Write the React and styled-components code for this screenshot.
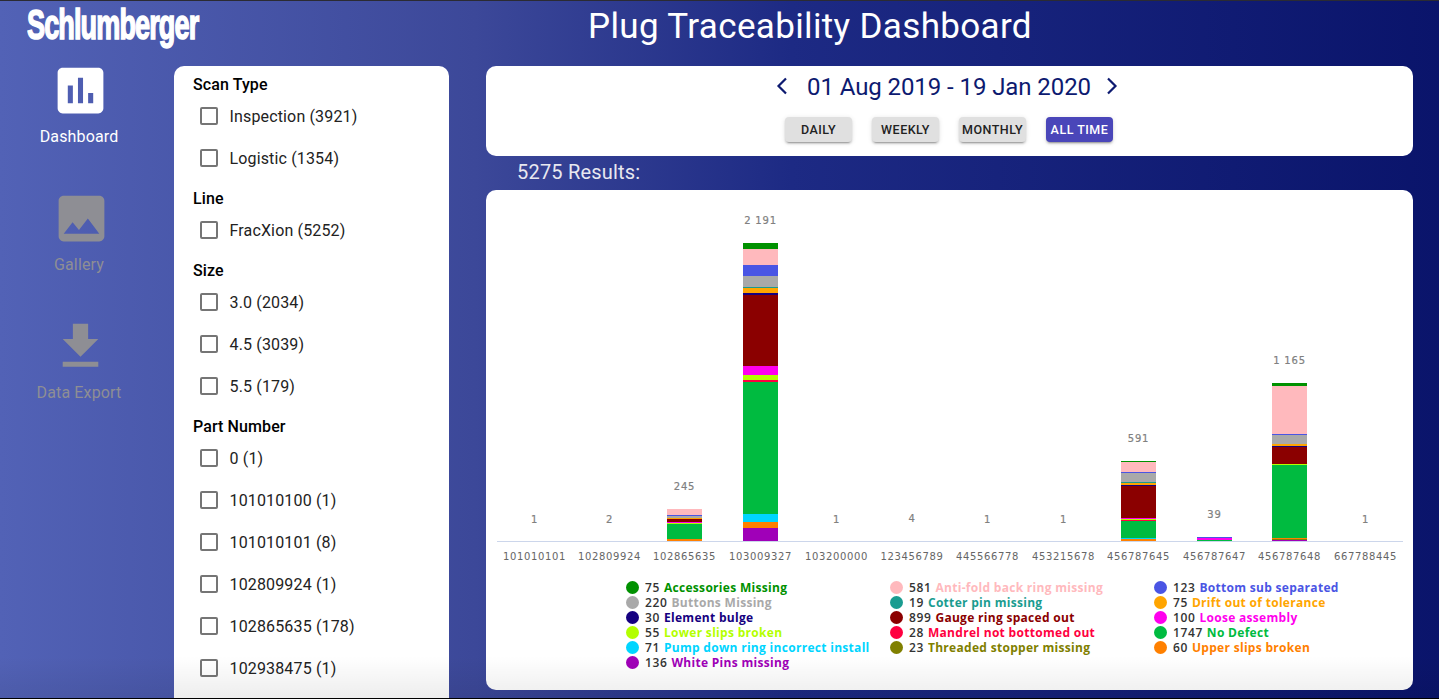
import React from 'react';
import styled, { createGlobalStyle } from 'styled-components';

const Global = createGlobalStyle`
  html, body { margin: 0; padding: 0; height: 100%; overflow: hidden; }
  body { font-family: Roboto, "Liberation Sans", sans-serif; }
`;

const Page = styled.div`
  position: relative;
  width: 1439px;
  height: 699px;
  overflow: hidden;
  box-sizing: border-box;
  border-top: 1px solid #2b2b33;
  border-bottom: 1px solid #000;
  background: linear-gradient(90deg, #5262b6 0%, #3c4899 33%, #1d2a84 55%, #0a146b 100%);
`;
const Header = styled.header`
  display: flex;
  align-items: center;
  height: 65px;
`;
const LogoBox = styled.div`
  width: 173px;
  margin-left: 27px;
  height: 50px;
  margin-top: -17px;
`;
const Logo = styled.span`
  display: inline-block;
  color: #fff;
  font-family: "Liberation Sans", sans-serif;
  font-weight: 700;
  font-size: 42px;
  line-height: 50px;
  letter-spacing: -1.4px;
  white-space: nowrap;
  -webkit-text-stroke: 1.6px #fff;
  transform: scaleX(0.645);
  transform-origin: left center;
`;
const Title = styled.h1`
  flex: 1;
  margin: 0 19px 0 0;
  padding-bottom: 15px;
  text-align: center;
  color: #fff;
  font-size: 35px;
  font-weight: 400;
  letter-spacing: 0.35px;
`;
const Body = styled.div`
  display: flex;
  height: 633px;
`;
const Nav = styled.nav`
  width: 158px;
  margin-right: 16px;
  display: flex;
  flex-direction: column;
  align-items: center;
  flex: none;
`;
const NavItem = styled.div`
  height: 128px;
  display: flex;
  flex-direction: column;
  align-items: center;
  color: ${p => (p.$active ? '#ffffff' : '#8e8e94')};
  font-size: 16px;
  letter-spacing: 0.15px;
  svg { display: block; margin: -6px 0 0 4px; fill: currentColor; }
`;
const NavLabel = styled.span`
  margin-top: 4px;
  line-height: 24px;
`;
const Filters = styled.aside`
  width: 275px;
  flex: none;
  background: #fff;
  border-radius: 10px 10px 0 0;
  box-sizing: border-box;
  padding: 8px 0 0 19px;
  overflow: hidden;
`;
const GroupTitle = styled.div`
  font-size: 16px;
  font-weight: 500;
  line-height: 21px;
  color: #000;
  letter-spacing: 0.1px;
`;
const Group = styled.div`
  margin-bottom: 9px;
`;
const Check = styled.label`
  display: flex;
  align-items: center;
  height: 42px;
  padding-left: 7px;
  font-size: 16px;
  letter-spacing: 0.15px;
  color: #222;
`;
const Box = styled.span`
  width: 18px;
  height: 18px;
  box-sizing: border-box;
  border: 2px solid #757575;
  border-radius: 2px;
  margin-right: 11.5px;
`;
const Main = styled.main`
  width: 927px;
  margin-left: 37px;
  flex: none;
`;
const DateCard = styled.section`
  background: #fff;
  border-radius: 10px;
  height: 90px;
  display: flex;
  flex-direction: column;
  align-items: center;
`;
const DateRow = styled.div`
  display: flex;
  align-items: center;
  justify-content: center;
  gap: 13px;
  margin-top: 6px;
  height: 30px;
  padding-right: 5px;
  color: #0d1a70;
  svg { display: block; margin-top: -3px; }
  svg:last-child { margin-left: -4px; }
`;
const DateText = styled.div`
  font-size: 24px;
  line-height: 30px;
  letter-spacing: -0.08px;
`;
const Buttons = styled.div`
  display: flex;
  gap: 20px;
  margin-top: 15px;
  padding-right: 1px;
`;
const Btn = styled.button`
  width: 67px;
  height: 25px;
  padding: 0;
  border: 0;
  border-radius: 4px;
  font-family: inherit;
  font-size: 12.5px;
  font-weight: 500;
  letter-spacing: 0.5px;
  white-space: nowrap;
  background: ${p => (p.$active ? '#4a46b9' : '#e0e0e0')};
  color: ${p => (p.$active ? '#fff' : '#222')};
  box-shadow: 0 3px 1px -2px rgba(0,0,0,.2), 0 2px 2px 0 rgba(0,0,0,.14), 0 1px 5px 0 rgba(0,0,0,.12);
`;
const Results = styled.div`
  height: 34px;
  padding-left: 31px;
  color: #e8e8f0;
  font-size: 20px;
  line-height: 32px;
  letter-spacing: 0.2px;
`;
const ChartCard = styled.section`
  background: #fff;
  border-radius: 10px;
  height: 500px;
  overflow: hidden;
  svg { display: block; }
`;
const Legend = styled.div`
  display: grid;
  grid-template-columns: repeat(3, 264px);
  grid-auto-rows: 15px;
  padding: 5px 0 0 140px;
  font-family: "Open Sans", sans-serif;
  font-size: 12px;
  font-weight: 700;
  letter-spacing: 0.3px;
  line-height: 15px;
`;
const LegendItem = styled.div`
  display: flex;
  align-items: center;
  white-space: nowrap;
  color: ${p => p.$color};
`;
const Dot = styled.span`
  width: 13px;
  height: 13px;
  border-radius: 50%;
  margin-right: 6px;
  background: ${p => p.$color};
`;
const Count = styled.span`
  color: #333;
  font-weight: 600;
  letter-spacing: 0.6px;
  margin-right: 4px;
`;
const Fade = styled.div`
  position: absolute;
  left: 0;
  right: 0;
  bottom: 0;
  height: 42px;
  background: linear-gradient(180deg, rgba(0,0,0,0), rgba(0,0,0,.07));
  pointer-events: none;
`;

const C = {
  acc: '#009100', anti: '#ffb9bd', bot: '#4a55e4', btn: '#a9a9a9', cot: '#1a9c90',
  drift: '#ffa500', el: '#150080', gauge: '#8b0000', loose: '#ff00ee', low: '#b3ff00',
  man: '#ff0040', no: '#00bb40', pump: '#00d5ff', thr: '#808000', up: '#ff8000', white: '#a000b8',
};

const filters = [
  ['Scan Type', ['Inspection (3921)', 'Logistic (1354)']],
  ['Line', ['FracXion (5252)']],
  ['Size', ['3.0 (2034)', '4.5 (3039)', '5.5 (179)']],
  ['Part Number', ['0 (1)', '101010100 (1)', '101010101 (8)', '102809924 (1)', '102865635 (178)', '102938475 (1)']],
];

const legend = [
  [75, 'Accessories Missing', C.acc], [581, 'Anti-fold back ring missing', C.anti], [123, 'Bottom sub separated', C.bot],
  [220, 'Buttons Missing', C.btn], [19, 'Cotter pin missing', C.cot], [75, 'Drift out of tolerance', C.drift],
  [30, 'Element bulge', C.el], [899, 'Gauge ring spaced out', C.gauge], [100, 'Loose assembly', C.loose],
  [55, 'Lower slips broken', C.low], [28, 'Mandrel not bottomed out', C.man], [1747, 'No Defect', C.no],
  [71, 'Pump down ring incorrect install', C.pump], [23, 'Threaded stopper missing', C.thr], [60, 'Upper slips broken', C.up],
  [136, 'White Pins missing', C.white],
];

const cats = [
  ['101010101', 534.5, '1', 519],
  ['102809924', 609.5, '2', 519],
  ['102865635', 684.5, '245', 486],
  ['103009327', 760.5, '2 191', 220],
  ['103200000', 836.5, '1', 519],
  ['123456789', 912, '4', 518],
  ['445566778', 987.5, '1', 519],
  ['453215678', 1063.5, '1', 519],
  ['456787645', 1138.5, '591', 438],
  ['456787647', 1214.5, '39', 514],
  ['456787648', 1289.5, '1 165', 360],
  ['667788445', 1365.5, '1', 519],
];

const bars = [
  { x: 667, segs: [[509, 515, C.anti], [515, 516, C.bot], [516, 518, C.btn], [518, 519, C.drift], [519, 522, C.gauge], [522, 523, C.loose], [523, 524, C.low], [524, 539, C.no], [539, 541, C.up]] },
  { x: 743, segs: [[243, 249, C.acc], [249, 265, C.anti], [265, 276, C.bot], [276, 287, C.btn], [287, 288, C.cot], [288, 293, C.drift], [293, 295, C.el], [295, 366, C.gauge], [366, 375, C.loose], [375, 380, C.low], [380, 382, C.man], [382, 514, C.no], [514, 522, C.pump], [522, 528, C.up], [528, 541, C.white]] },
  { x: 1121, segs: [[461, 462, C.acc], [462, 472, C.anti], [472, 473, C.bot], [473, 482, C.btn], [482, 483, C.cot], [483, 485, C.drift], [485, 486, C.el], [486, 518, C.gauge], [518, 519, C.loose], [519, 520, C.low], [520, 521, C.man], [521, 538, C.no], [538, 539, C.pump], [539, 541, C.up]] },
  { x: 1197, segs: [[537, 538, C.bot], [538, 540, C.loose], [540, 541, C.no]] },
  { x: 1272, segs: [[383, 386, C.acc], [386, 434, C.anti], [434, 435, C.bot], [435, 444, C.btn], [444, 446, C.drift], [446, 447, C.el], [447, 464, C.gauge], [464, 465, C.low], [465, 538, C.no], [538, 539, C.up], [539, 540, C.thr], [540, 541, C.white]] },
];

const Chart = () => (
  <svg width="927" height="385" viewBox="486 190 927 385" fontFamily="'DejaVu Sans', sans-serif">
    {bars.map(b => b.segs.map(([y1, y2, c]) => (
      <rect key={b.x + '-' + y1} x={b.x} y={y1} width="35" height={y2 - y1} fill={c} />
    )))}
    <rect x="497" y="541" width="906" height="1" fill="#ccd6eb" />
    {cats.map(([name, x, v, y]) => (
      <g key={name}>
        <text x={x} y={y + 4} textAnchor="middle" fontSize="10" fill="#808080" stroke="#808080" strokeWidth="0.2" letterSpacing="0.8">{v}</text>
        <text x={x} y="560" textAnchor="middle" fontSize="10" fill="#666" letterSpacing="0.65">{name}</text>
      </g>
    ))}
  </svg>
);

const Ico = ({ d }) => <svg width="61" height="61" viewBox="0 0 24 24"><path d={d} /></svg>;
const Chev = ({ d }) => (
  <svg width="24" height="24" viewBox="0 0 24 24" fill="none" stroke="currentColor" strokeWidth="2.2"><path d={d} /></svg>
);

export default function App() {
  return (
    <Page>
      <Global />
      <Header>
        <LogoBox><Logo>Schlumberger</Logo></LogoBox>
        <Title>Plug Traceability Dashboard</Title>
      </Header>
      <Body>
        <Nav>
          <NavItem $active>
            <Ico d="M19 3H5c-1.1 0-2 .9-2 2v14c0 1.1.9 2 2 2h14c1.1 0 2-.9 2-2V5c0-1.1-.9-2-2-2zM9 17H7v-7h2v7zm4 0h-2V7h2v10zm4 0h-2v-4h2v4z" />
            <NavLabel>Dashboard</NavLabel>
          </NavItem>
          <NavItem>
            <Ico d="M21 19V5c0-1.1-.9-2-2-2H5c-1.1 0-2 .9-2 2v14c0 1.1.9 2 2 2h14c1.1 0 2-.9 2-2zM8.5 13.5l2.5 3.01L14.5 12l4.5 6H5l3.5-4.5z" />
            <NavLabel>Gallery</NavLabel>
          </NavItem>
          <NavItem>
            <Ico d="M19 9h-4V3H9v6H5l7 7 7-7zM5 18v2h14v-2H5z" />
            <NavLabel>Data Export</NavLabel>
          </NavItem>
        </Nav>
        <Filters>
          {filters.map(([t, items]) => (
            <Group key={t}>
              <GroupTitle>{t}</GroupTitle>
              {items.map(i => <Check key={i}><Box />{i}</Check>)}
            </Group>
          ))}
        </Filters>
        <Main>
          <DateCard>
            <DateRow>
              <Chev d="M16 4.5L8.5 12l7.5 7.5" />
              <DateText>01 Aug 2019 - 19 Jan 2020</DateText>
              <Chev d="M8 4.5l7.5 7.5L8 19.5" />
            </DateRow>
            <Buttons>
              <Btn>DAILY</Btn>
              <Btn>WEEKLY</Btn>
              <Btn>MONTHLY</Btn>
              <Btn $active>ALL TIME</Btn>
            </Buttons>
          </DateCard>
          <Results>5275 Results:</Results>
          <ChartCard>
            <Chart />
            <Legend>
              {legend.map(([n, l, c]) => (
                <LegendItem key={l} $color={c}><Dot $color={c} /><Count>{n}</Count>{l}</LegendItem>
              ))}
            </Legend>
          </ChartCard>
        </Main>
      </Body>
      <Fade />
    </Page>
  );
}
